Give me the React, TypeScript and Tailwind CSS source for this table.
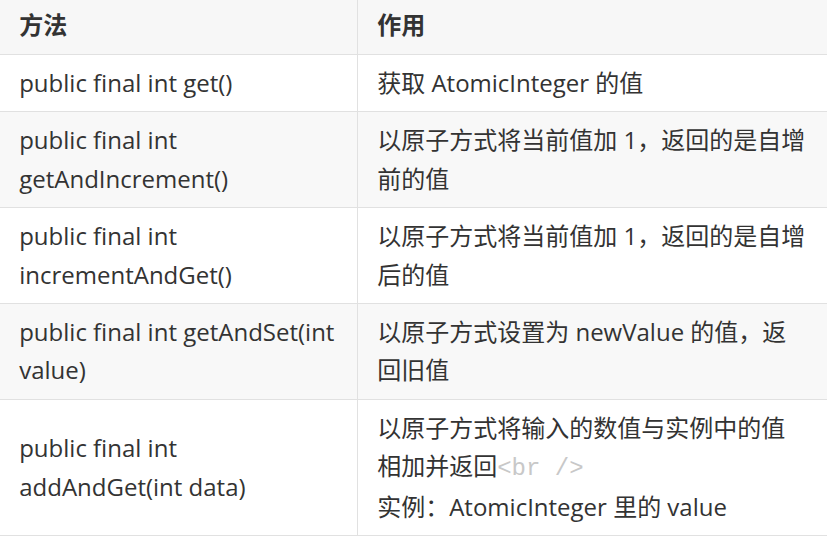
import React from "react";

const rows: { m: React.ReactNode; d: React.ReactNode; striped?: boolean }[] = [
  { m: "public final int get()", d: "获取 AtomicInteger 的值" },
  { m: "public final int getAndIncrement()", d: "以原子方式将当前值加 1，返回的是自增前的值", striped: true },
  { m: "public final int incrementAndGet()", d: "以原子方式将当前值加 1，返回的是自增后的值" },
  { m: "public final int getAndSet(int value)", d: "以原子方式设置为 newValue 的值，返回旧值", striped: true },
  {
    m: "public final int addAndGet(int data)",
    d: (
      <>
        以原子方式将输入的数值与实例中的值相加并返回
        <code
          className="text-[#c8c8c8] leading-[37.6px]"
          style={{ fontFamily: '"Liberation Mono", "DejaVu Sans Mono", monospace' }}
        >
          &lt;br /&gt;
        </code>
        <br />
        实例：AtomicInteger 里的 value
      </>
    ),
  },
];

export default function App() {
  return (
    <div className="w-[827px] h-[540px] overflow-hidden bg-white">
      <table
        className="w-[827px] table-fixed border-collapse text-[24px] leading-[38.4px] text-[#333] -mt-[3.4px]"
        style={{ fontFamily: '"Open Sans", "Noto Sans CJK SC", sans-serif' }}
      >
        <colgroup>
          <col className="w-[357.5px]" />
          <col />
        </colgroup>
        <thead>
          <tr className="bg-[#f7f7f7]">
            <th className="text-left font-bold px-[19.2px] pt-[9px] pb-[10px] border-b border-r border-[#e1e1e1]">方法</th>
            <th className="text-left font-bold px-[19.2px] pt-[9px] pb-[10px] border-b border-[#e1e1e1]">作用</th>
          </tr>
        </thead>
        <tbody>
          {rows.map((r, i) => (
            <tr key={i} className={r.striped ? "bg-[#f8f8f8]" : "bg-white"}>
              <td className="align-middle px-[19.2px] py-[9px] border-b border-r border-[#e1e1e1]">{r.m}</td>
              <td className="align-middle px-[19.2px] py-[9px] border-b border-[#e1e1e1]">{r.d}</td>
            </tr>
          ))}
        </tbody>
      </table>
    </div>
  );
}
